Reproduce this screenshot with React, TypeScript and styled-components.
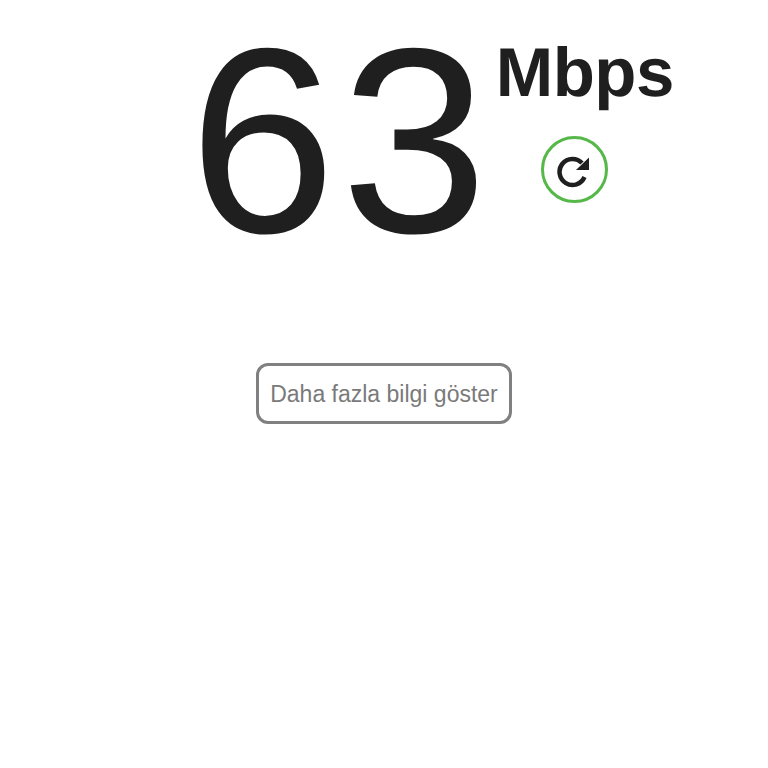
import styled, { createGlobalStyle } from "styled-components";

const Global = createGlobalStyle`
  html, body {
    margin: 0;
    background: #fff;
  }
  body {
    font-family: "Liberation Sans", Arial, sans-serif;
    text-rendering: geometricPrecision;
  }
`;

const Page = styled.div`
  width: 768px;
  height: 768px;
  display: flex;
  flex-direction: column;
  align-items: center;
`;

const Result = styled.div`
  align-self: flex-start;
  display: flex;
  align-items: flex-start;
  padding-left: 189px;
  height: 363px;
`;

const Speed = styled.div`
  font-size: 264px;
  line-height: 304px;
  margin-top: -11px;
  color: #1f1f1f;
  letter-spacing: 5px;
`;

const Side = styled.div`
  display: flex;
  flex-direction: column;
  align-items: flex-start;
  margin-left: 3px;
  padding-top: 36px;
`;

const Unit = styled.div`
  font-size: 69px;
  line-height: 74px;
  font-weight: 700;
  color: #1f1f1f;
  letter-spacing: -0.5px;
`;

const Retry = styled.button`
  width: 67px;
  height: 67px;
  margin-top: 26px;
  margin-left: 45px;
  padding: 0;
  display: flex;
  align-items: center;
  justify-content: center;
  background: #fff;
  border: 3px solid #55b848;
  border-radius: 50%;
`;

const More = styled.button`
  width: 256px;
  height: 61px;
  box-sizing: border-box;
  background: #fff;
  border: 3px solid #808080;
  border-radius: 12px;
  color: #7a7a7a;
  font-family: inherit;
  font-size: 23px;
  padding: 2px 0 0;
`;

export default function App() {
  return (
    <Page>
      <Global />
      <Result>
        <Speed>63</Speed>
        <Side>
          <Unit>Mbps</Unit>
          <Retry aria-label="Yenile">
            <svg width="36" height="36" viewBox="0 0 36 36" fill="none">
              <path d="M26 11A13 13 0 1 0 28.5 25" stroke="#1f1f1f" strokeWidth="4.5" />
              <path d="M33 5.5V18H20Z" fill="#1f1f1f" />
            </svg>
          </Retry>
        </Side>
      </Result>
      <More>Daha fazla bilgi göster</More>
    </Page>
  );
}
